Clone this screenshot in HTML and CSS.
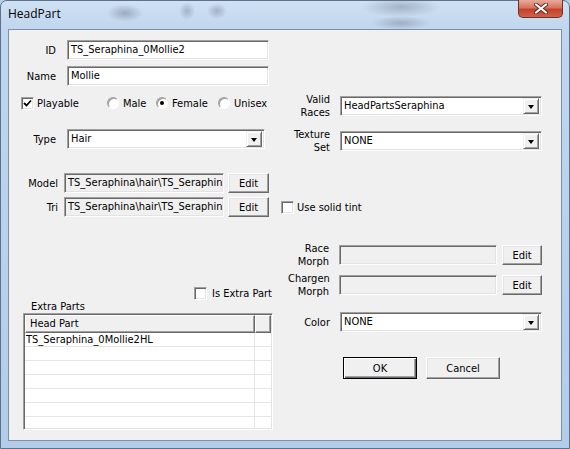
FILE: index.html
```html
<!DOCTYPE html>
<html lang="en">
<head>
    <meta charset="UTF-8">
    <title>HeadPart</title>
    <link rel="stylesheet" href="styles.css">
</head>
<body>

    <div class="window">
        <div class="titlebar">
            <span class="title">HeadPart</span>
            <div class="close">
                <svg width="14" height="11" viewBox="0 0 14 11">
                    <path d="M2 1.5 L12 9.5 M12 1.5 L2 9.5" stroke="#5a2a22" stroke-width="4" stroke-linecap="round"/>
                    <path d="M2 1.5 L12 9.5 M12 1.5 L2 9.5" stroke="#fff" stroke-width="2.2" stroke-linecap="round"/>
                </svg>
            </div>
        </div>

        <div class="client">
            <div class="col-left">
                <div class="row row-id">
                    <span class="lbl">ID</span>
                    <div class="field w-id">TS_Seraphina_0Mollie2</div>
                </div>
                <div class="row row-name">
                    <span class="lbl">Name</span>
                    <div class="field w-id">Mollie</div>
                </div>

                <div class="options">
                    <div class="opt opt-playable">
                        <span class="chk">
                            <svg width="9" height="9" viewBox="0 0 9 9"><path d="M1 4 L3.5 6.5 L8 1.5" stroke="#000" stroke-width="1.8" fill="none"/></svg>
                        </span>
                        <span>Playable</span>
                    </div>
                    <div class="opt opt-male"><span class="radio"></span><span>Male</span></div>
                    <div class="opt opt-female"><span class="radio on"></span><span>Female</span></div>
                    <div class="opt"><span class="radio"></span><span>Unisex</span></div>
                </div>

                <div class="row row-type">
                    <span class="lbl">Type</span>
                    <div class="combo w-type">
                        <span class="combo-text">Hair</span>
                        <span class="arrow"></span>
                    </div>
                </div>

                <div class="row row-model">
                    <span class="lbl lbl-model">Model</span>
                    <div class="field readonly w-path">TS_Seraphina\hair\TS_Seraphin</div>
                    <button class="btn btn-edit">Edit</button>
                </div>
                <div class="row row-tri">
                    <span class="lbl lbl-model">Tri</span>
                    <div class="field readonly w-path">TS_Seraphina\hair\TS_Seraphin</div>
                    <button class="btn btn-edit">Edit</button>
                    <div class="opt opt-tint"><span class="chk"></span><span>Use solid tint</span></div>
                </div>

                <div class="opt opt-extra">
                    <span class="chk"></span><span class="clip">Is Extra Part</span>
                </div>
                <div class="extra-label">Extra Parts</div>

                <div class="list">
                    <div class="list-head">
                        <span class="hcell hcell-main">Head Part</span>
                        <span class="hcell hcell-rest"></span>
                    </div>
                    <div class="list-row"><span class="cell">TS_Seraphina_0Mollie2HL</span><span class="cell-rest"></span></div>
                    <div class="list-row"><span class="cell"></span><span class="cell-rest"></span></div>
                    <div class="list-row"><span class="cell"></span><span class="cell-rest"></span></div>
                    <div class="list-row"><span class="cell"></span><span class="cell-rest"></span></div>
                    <div class="list-row"><span class="cell"></span><span class="cell-rest"></span></div>
                    <div class="list-row"><span class="cell"></span><span class="cell-rest"></span></div>
                    <div class="list-row"><span class="cell"></span><span class="cell-rest"></span></div>
                </div>
            </div>

            <div class="col-right">
                <div class="row row2 row-races">
                    <span class="lbl2">Valid<br>Races</span>
                    <div class="combo w-combo">
                        <span class="combo-text">HeadPartsSeraphina</span>
                        <span class="arrow"></span>
                    </div>
                </div>
                <div class="row row2 row-texture">
                    <span class="lbl2">Texture<br>Set</span>
                    <div class="combo w-combo">
                        <span class="combo-text">NONE</span>
                        <span class="arrow"></span>
                    </div>
                </div>

                <div class="row row2 row-race-morph">
                    <span class="lbl2 lbl-morph">Race<br>Morph</span>
                    <div class="field readonly w-morph"></div>
                    <button class="btn btn-edit btn-morph">Edit</button>
                </div>
                <div class="row row2 row-chargen">
                    <span class="lbl2 lbl-morph">Chargen<br>Morph</span>
                    <div class="field readonly w-morph"></div>
                    <button class="btn btn-edit btn-morph">Edit</button>
                </div>

                <div class="row row-color">
                    <span class="lbl2">Color</span>
                    <div class="combo w-combo">
                        <span class="combo-text">NONE</span>
                        <span class="arrow"></span>
                    </div>
                </div>

                <div class="buttons">
                    <button class="btn btn-big btn-default">OK</button>
                    <button class="btn btn-big">Cancel</button>
                </div>
            </div>
        </div>
    </div>

</body>
</html>
```

FILE: styles.css
```css
        body {
            margin: 0;
            background-color: #b7cee8;
        }

        .window {
            width: 570px;
            height: 449px;
            box-sizing: border-box;
            padding: 0 7px 7px 7px;
            border: 1px solid #5d7290;
            border-radius: 7px 7px 0 0;
            background-color: #b9d1eb;
            background-image:
                radial-gradient(ellipse 18px 9px at 124px 12px, rgba(70, 80, 100, 0.35), transparent),
                radial-gradient(ellipse 8px 9px at 186px 10px, rgba(70, 80, 100, 0.3), transparent),
                radial-gradient(ellipse 10px 8px at 216px 10px, rgba(70, 80, 100, 0.3), transparent),
                radial-gradient(ellipse 40px 10px at 400px 6px, rgba(70, 80, 100, 0.3), transparent),
                radial-gradient(ellipse 30px 7px at 400px 22px, rgba(70, 80, 100, 0.3), transparent),
                linear-gradient(to bottom, #cfe1f3 0, #c0d6ee 28px, #b3cce8 100%);
        }

        .titlebar {
            height: 28px;
            display: flex;
            justify-content: space-between;
            align-items: flex-start;
        }

        .title {
            font-family: "Open Sans", "Noto Sans", sans-serif;
            font-size: 12px;
            line-height: 16px;
            color: #000;
            padding-top: 5px;
            padding-left: 0;
        }

        .close {
            width: 45px;
            height: 18px;
            margin-right: -1px;
            margin-top: -1px;
            box-sizing: border-box;
            border: 1px solid #6b3328;
            border-top: none;
            border-radius: 0 0 5px 5px;
            background: linear-gradient(to bottom, #e9a99a 0, #d9735f 45%, #c4402a 55%, #d2624a 100%);
            display: flex;
            align-items: center;
            justify-content: center;
        }

        .client {
            height: 412px;
            box-sizing: border-box;
            border: 1px solid #7d90a8;
            background-color: #f0f0f0;
            display: flex;
            font-family: "DejaVu Sans Condensed", "DejaVu Sans", sans-serif;
            font-stretch: condensed;
            font-size: 11px;
            color: #000;
        }

        .col-left {
            width: 279px;
            flex-shrink: 0;
        }

        .col-right {
            flex: 1;
        }

        .row {
            display: flex;
            align-items: center;
            height: 20px;
        }

        .row2 {
            height: 26px;
        }

        .row-id { margin-top: 10px; }
        .row-name { margin-top: 6px; }
        .row-type { margin-top: 19px; }
        .row-model { margin-top: 24px; }
        .row-tri { margin-top: 4px; }

        .row-races { margin-top: 63px; }
        .row-texture { margin-top: 9px; }
        .row-race-morph { margin-top: 88px; }
        .row-chargen { margin-top: 4px; }
        .row-color { margin-top: 14px; }

        .lbl {
            width: 47px;
            margin-right: 11px;
            text-align: right;
            flex-shrink: 0;
        }

        .lbl-model {
            width: 49px;
            margin-right: 6px;
        }

        .lbl2 {
            width: 42px;
            margin-right: 10px;
            text-align: right;
            line-height: 13px;
            flex-shrink: 0;
            white-space: nowrap;
        }

        .lbl-morph {
            width: 41px;
        }

        .field {
            height: 20px;
            box-sizing: border-box;
            border: 1px solid;
            border-color: #a0a0a0 #fff #fff #a0a0a0;
            box-shadow: inset 1px 1px #696969, inset -1px -1px #e3e3e3;
            background-color: #fff;
            padding: 0 3px;
            line-height: 18px;
            white-space: nowrap;
            overflow: hidden;
            flex-shrink: 0;
        }

        .readonly {
            background-color: #f0f0f0;
        }

        .w-id { width: 202px; }
        .w-path { width: 160px; }
        .w-morph { width: 158px; }

        .combo {
            height: 20px;
            box-sizing: border-box;
            border: 1px solid;
            border-color: #a0a0a0 #fff #fff #a0a0a0;
            box-shadow: inset 1px 1px #696969, inset -1px -1px #e3e3e3;
            background-color: #fff;
            padding: 2px 2px 2px 2px;
            display: flex;
            align-items: center;
            flex-shrink: 0;
        }

        .w-type { width: 198px; }
        .w-combo { width: 202px; }

        .combo-text {
            flex: 1;
            padding-left: 1px;
            line-height: 16px;
            white-space: nowrap;
            overflow: hidden;
        }

        .arrow {
            width: 16px;
            height: 16px;
            box-sizing: border-box;
            border: 1px solid;
            border-color: #f0f0f0 #696969 #696969 #f0f0f0;
            box-shadow: inset 1px 1px #fff, inset -1px -1px #a0a0a0;
            background-color: #f0f0f0;
            display: flex;
            align-items: center;
            justify-content: center;
        }

        .arrow::after {
            content: "";
            border-left: 3.5px solid transparent;
            border-right: 3.5px solid transparent;
            border-top: 4px solid #000;
            margin-top: 1px;
        }

        .btn {
            font-family: inherit;
            font-stretch: inherit;
            font-size: 11px;
            color: #000;
            background-color: #f0f0f0;
            box-sizing: border-box;
            border: 1px solid;
            border-color: #fff #696969 #696969 #fff;
            box-shadow: inset -1px -1px #a0a0a0, inset 1px 1px #e3e3e3;
            padding: 0;
            margin: 0;
            flex-shrink: 0;
        }

        .btn-edit {
            width: 41px;
            height: 20px;
            margin-left: 4px;
        }

        .btn-morph {
            width: 40px;
            margin-left: 5px;
        }

        .btn-big {
            width: 74px;
            height: 22px;
        }

        .btn-default {
            border-color: #000;
            box-shadow: inset 1px 1px #fff, inset -1px -1px #696969, inset -2px -2px #a0a0a0;
        }

        .buttons {
            display: flex;
            gap: 9px;
            margin-top: 25px;
            margin-left: 55px;
        }

        .options {
            display: flex;
            align-items: center;
            height: 14px;
            margin-top: 10px;
            margin-left: 12px;
        }

        .opt {
            display: flex;
            align-items: center;
            white-space: nowrap;
            flex-shrink: 0;
        }

        .opt-playable { width: 86px; }
        .opt-male { width: 49px; }
        .opt-female { width: 62px; }

        .opt-tint {
            margin-left: 12px;
        }

        .chk {
            width: 13px;
            height: 13px;
            box-sizing: border-box;
            border: 1px solid;
            border-color: #a0a0a0 #fff #fff #a0a0a0;
            box-shadow: inset 1px 1px #696969, inset -1px -1px #e3e3e3;
            background-color: #fff;
            margin-right: 3px;
            display: flex;
            align-items: center;
            justify-content: center;
            flex-shrink: 0;
        }

        .radio {
            width: 12px;
            height: 12px;
            box-sizing: border-box;
            border-radius: 50%;
            border: 1px solid;
            border-color: #a0a0a0 #fff #fff #a0a0a0;
            box-shadow: inset 1px 1px #9a9a9a;
            background-color: #fff;
            margin-right: 4px;
            display: flex;
            align-items: center;
            justify-content: center;
            flex-shrink: 0;
        }

        .radio.on::after {
            content: "";
            width: 4px;
            height: 4px;
            border-radius: 50%;
            background-color: #000;
        }

        .opt-extra {
            margin-top: 70px;
            margin-left: 185px;
            height: 13px;
        }

        .opt-extra .chk {
            margin-right: 5px;
        }

        .clip {
            width: 60px;
            overflow: hidden;
        }

        .extra-label {
            margin-left: 22px;
            line-height: 13px;
            height: 13px;
        }

        .list {
            width: 250px;
            height: 117px;
            margin-left: 14px;
            box-sizing: border-box;
            border: 1px solid;
            border-color: #a0a0a0 #fff #fff #a0a0a0;
            box-shadow: inset 1px 1px #696969, inset -1px -1px #e3e3e3;
            background-color: #fff;
            padding: 1px;
            overflow: hidden;
        }

        .list-head {
            display: flex;
            height: 18px;
        }

        .hcell {
            box-sizing: border-box;
            height: 18px;
            border: 1px solid;
            border-color: #fff #696969 #696969 #fff;
            box-shadow: inset -1px -1px #a0a0a0;
            background-color: #f0f0f0;
            line-height: 16px;
        }

        .hcell-main {
            width: 230px;
            padding-left: 4px;
        }

        .hcell-rest {
            flex: 1;
        }

        .list-row {
            display: flex;
            height: 14px;
            box-sizing: border-box;
            border-bottom: 1px solid #e6e6e6;
        }

        .cell {
            width: 230px;
            box-sizing: border-box;
            border-right: 1px solid #e6e6e6;
            padding-left: 1px;
            line-height: 13px;
            white-space: nowrap;
        }

        .cell-rest {
            flex: 1;
        }
```
